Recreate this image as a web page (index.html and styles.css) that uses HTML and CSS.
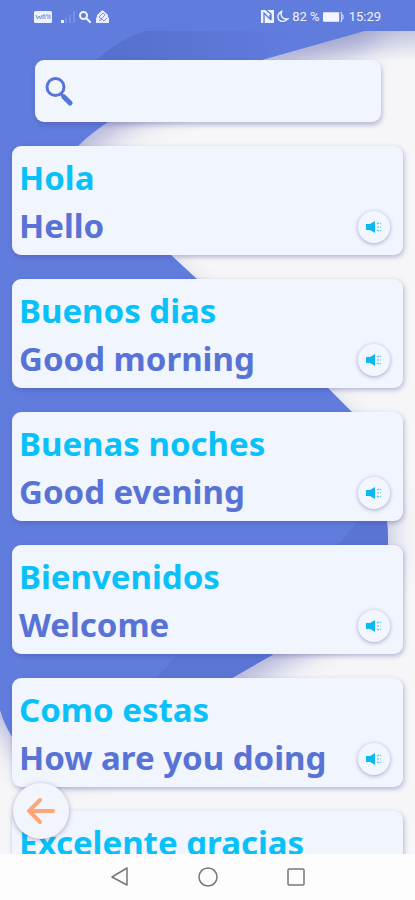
FILE: index.html
```html
<!DOCTYPE html>
<html lang="es">
<head>
<meta charset="utf-8">
<meta name="viewport" content="width=device-width, initial-scale=1">
<title>Saludos</title>
<link rel="stylesheet" href="styles.css">
</head>
<body>
<svg class="defs" aria-hidden="true">
  <symbol id="speaker" viewBox="0 0 16 14">
    <path fill="#0bb9ee" d="M0 4h4L9 1v12L4 10H0z"/>
    <g fill="none" stroke="#3cc6f0" stroke-width="1.2"><path d="M11 4l2-1M11 10l2 1M11 7h2"/><path d="M14 3l1 1M14 7h1M14 11l1-1" opacity=".7"/></g>
  </symbol>
</svg>
<header class="status">
  <div class="status-group">
    <svg width="18" height="12" viewBox="0 0 18 12"><rect width="18" height="12" rx="1.5" fill="#edf2ff"/><path d="M2 4l1.500 4L5 5l1.500 3L8 4M9 8V4h2v4M12 4h2v4M15 4h1v4" fill="none" stroke="#7890dd"/></svg>
    <svg class="signal" width="15" height="12" viewBox="0 0 15 12"><path fill="#e6edff" d="M0 9h3v3H0z"/><path fill="#7890e2" d="M4 7h2v5H4zM8 4h2v8H8zM12 0h2v12h-2z"/></svg>
    <svg width="12" height="12" viewBox="0 0 12 12"><g fill="none" stroke="#f3f6ff" stroke-width="2"><circle cx="4.500" cy="4.500" r="3.500"/><path d="M7 7l5 5"/></g></svg>
    <svg class="home" width="13" height="13" viewBox="0 0 13 13"><path fill="#e8eeff" d="M6.500 0L12 5v2l1 1v5H0V8l1-1V5z"/><path d="M3 7l4-4 2 2-4 4zM3 11l3-2 2 2 3-3" fill="none" stroke="#7d94df"/></svg>
  </div>
  <div class="status-group">
    <svg width="13" height="13" viewBox="0 0 13 13"><path fill="#edf2ff" d="M0 0h13v13H0z"/><path d="M3 13V3l6 6V5M5 0l5 4v6" fill="none" stroke="#5b78d9" stroke-width="1.300"/></svg>
    <svg width="12" height="13" viewBox="0 0 13 13"><path d="M5 1C1 3 0 7 2 10c3 3 7 2 10-1C7 10 3 7 5 1z" fill="none" stroke="#f0f4ff" stroke-width="1.500"/></svg>
    <span>82 %</span>
    <svg class="battery" width="21" height="10" viewBox="0 0 22 10"><rect width="17" height="10" rx="1" fill="#f3f6ff"/><path d="M18 .5h1.500v9H18M20 3h1v4h-1" fill="none" stroke="#dfe7ff"/></svg>
    <span>15:29</span>
  </div>
</header>
<main class="screen">
  <svg class="backdrop" viewBox="0 31 415 823" preserveAspectRatio="none" aria-hidden="true">
    <defs>
      <linearGradient id="topShade" x1="0" x2="1"><stop offset="0" stop-color="#566fcd"/><stop offset="1" stop-color="#607cdd"/></linearGradient>
      <linearGradient id="barShade" x1="0" y1="0" x2="0" y2="1"><stop offset="0" stop-color="#6e78b8" stop-opacity=".38"/><stop offset="1" stop-color="#6e78b8" stop-opacity="0"/></linearGradient>
      <filter id="blur" x="-20%" y="-20%" width="140%" height="140%"><feGaussianBlur stdDeviation="14"/></filter>
    </defs>
    <path fill="#f6f6f8" d="M0 31h415v823H0z"/>
    <path fill="#6368b0" opacity=".45" filter="url(#blur)" transform="translate(2 16)" d="M-40 0H390L365 31Q312 46 262 60C190 82 145 96 108 122Q90 134 78 146C50 190 105 200 171 255L197 279C240 315 290 350 328 388L352 412C375 438 386 475 387 521Q388 533 388 545C376 600 330 620 272 655L232 678C160 730 50 790 12 737Q4 724 0 710L-40 690z"/>
    <path fill="#607cdd" d="M0 31H365Q312 46 262 60C190 82 145 96 108 122Q90 134 78 146C50 190 105 200 171 255L197 279C240 315 290 350 328 388L352 412C375 438 386 475 387 521Q388 533 388 545C376 600 330 620 272 655L232 678C160 730 50 770 12 737Q4 724 0 710z"/>
    <path fill="url(#topShade)" d="M100 57Q120 39 145 31H300L262 60H96z"/>
    <path fill="#5b75d5" d="M358 521h29q1 12 1 24h-50zM177 655h95l-40 23h-75z"/>
    <path fill="url(#barShade)" d="M365 31h50v30H262z"/>
  </svg>
  <div class="content">
    <form class="search" role="search">
      <svg width="28" height="30" viewBox="0 0 28 30" aria-hidden="true"><circle cx="10.500" cy="11" r="8.500" fill="none" stroke="#5576d8" stroke-width="3"/><path d="M16 18l2 2" stroke="#5576d8" stroke-width="3"/><path d="M19 21l6 6" stroke="#5576d8" stroke-width="5" stroke-linecap="round"/></svg>
      <input type="search" aria-label="Buscar">
    </form>
    <ul class="phrases">
      <li class="card"><p class="term">Hola</p><p class="meaning">Hello</p><button class="speak" aria-label="Hola"><svg width="16" height="14"><use href="#speaker"/></svg></button></li>
      <li class="card"><p class="term">Buenos dias</p><p class="meaning">Good morning</p><button class="speak" aria-label="Buenos dias"><svg width="16" height="14"><use href="#speaker"/></svg></button></li>
      <li class="card"><p class="term">Buenas noches</p><p class="meaning">Good evening</p><button class="speak" aria-label="Buenas noches"><svg width="16" height="14"><use href="#speaker"/></svg></button></li>
      <li class="card"><p class="term">Bienvenidos</p><p class="meaning">Welcome</p><button class="speak" aria-label="Bienvenidos"><svg width="16" height="14"><use href="#speaker"/></svg></button></li>
      <li class="card"><p class="term">Como estas</p><p class="meaning">How are you doing</p><button class="speak" aria-label="Como estas"><svg width="16" height="14"><use href="#speaker"/></svg></button></li>
      <li class="card"><p class="term">Excelente gracias</p></li>
    </ul>
  </div>
  <button class="back" aria-label="Volver"><svg width="30" height="28" viewBox="0 0 30 28"><path d="M27 14H4M14 3L3 14l11 11" fill="none" stroke="#ffa678" stroke-width="4" stroke-linecap="round" stroke-linejoin="round"/></svg></button>
</main>
<nav class="navbar">
  <button aria-label="Atrás"><svg width="20" height="20" viewBox="0 0 20 20"><path d="M17 1v17L2 10z"/></svg></button>
  <button aria-label="Inicio"><svg width="20" height="20" viewBox="0 0 20 20"><circle cx="10" cy="10" r="9"/></svg></button>
  <button aria-label="Recientes"><svg width="20" height="20" viewBox="0 0 20 20"><rect x="2" y="2" width="16" height="16" rx="1"/></svg></button>
</nav>
</body>
</html>
```
FILE: styles.css
```css
* {
  box-sizing: border-box;
}

body {
  margin: 0;
  height: 100vh;
  display: flex;
  flex-direction: column;
  overflow: hidden;
  font-family: "Noto Sans", sans-serif;
}

svg {
  display: block;
  flex: none;
}

button {
  display: grid;
  place-items: center;
  padding: 0;
  border: 0;
}

.defs {
  position: absolute;
  width: 0;
  height: 0;
}

.status {
  flex: none;
  display: flex;
  justify-content: space-between;
  height: 31px;
  padding: 2px 34px 0;
  background: #607cdd;
  color: #f0f4ff;
  font: 13px/28px Roboto, sans-serif;
}

.status-group {
  display: flex;
  align-items: center;
  gap: 3px;
}

.signal {
  margin-left: 6px;
}

.home {
  margin-left: 2px;
}

.battery {
  margin-right: 2px;
}

.screen {
  position: relative;
  flex: 1;
  min-height: 0;
  overflow: hidden;
}

.backdrop {
  position: absolute;
  inset: 0;
  width: 100%;
  height: 100%;
}

.content {
  position: relative;
  padding: 29px 12px 0;
}

.search {
  display: flex;
  align-items: center;
  height: 62px;
  margin: 0 22px 24px 23px;
  padding-left: 10px;
  border-radius: 9px;
  background: #f1f5fe;
  box-shadow: 1px 3px 5px rgba(70, 70, 150, 0.35);
}

.search input {
  flex: 1;
  min-width: 0;
  height: 100%;
  padding: 0 10px;
  border: 0;
  outline: 0;
  background: none;
  font: 20px "Noto Sans", sans-serif;
}

.phrases {
  display: grid;
  gap: 24px;
  margin: 0;
  padding: 0;
  list-style: none;
}

.card {
  position: relative;
  min-height: 109px;
  padding: 8px 60px 5px 7px;
  border-radius: 9px;
  background: #f1f5fe;
  box-shadow: 1px 2px 5px rgba(70, 70, 150, 0.38);
}

.term,
.meaning {
  margin: 0;
  font-size: 33px;
  font-weight: 700;
  line-height: 48px;
  white-space: nowrap;
}

.term {
  color: #08c1f9;
}

.meaning {
  color: #5873d5;
}

.speak {
  position: absolute;
  right: 13px;
  bottom: 12px;
  width: 32px;
  height: 32px;
  border-radius: 50%;
  background: #f4f6fe;
  box-shadow: 0 1px 4px rgba(70, 70, 130, 0.45);
}

.back {
  position: absolute;
  left: 13px;
  bottom: 15px;
  width: 56px;
  height: 56px;
  border-radius: 50%;
  background: #f3f5fd;
  box-shadow: 0 1px 5px rgba(70, 70, 130, 0.45);
}

.navbar {
  flex: none;
  display: flex;
  justify-content: center;
  gap: 68px;
  height: 46px;
  background: #fdfdfe;
}

.navbar button {
  width: 20px;
  background: none;
}

.navbar svg {
  fill: none;
  stroke: #777;
  stroke-width: 1.5;
  stroke-linejoin: round;
}
```
